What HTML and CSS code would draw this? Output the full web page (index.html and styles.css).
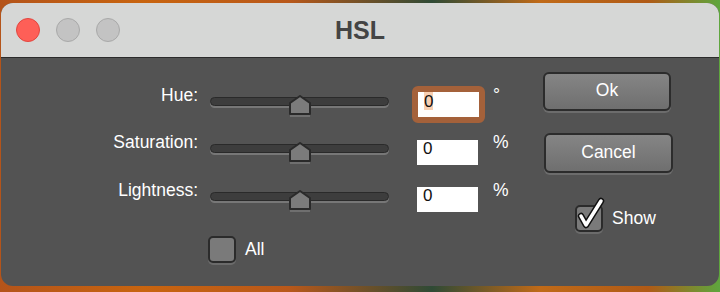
FILE: index.html
```html
<!DOCTYPE html>
<html lang="en">
<head>
  <meta charset="UTF-8">
  <title>HSL</title>
  <link rel="stylesheet" href="styles.css">
</head>
<body>

  <div class="window">
    <div class="titlebar">
      <div class="lights">
        <span class="light close"></span>
        <span class="light"></span>
        <span class="light"></span>
      </div>
      <h1 class="title">HSL</h1>
      <div></div>
    </div>

    <div class="content">
      <!-- sliders -->
      <div class="sliders">
        <label class="label">Hue:</label>
        <div class="slider">
          <div class="track"></div>
          <svg class="thumb" width="22" height="22" viewBox="0 0 22 22">
            <polygon points="1,8 11,1 21,8 21,19 1,19" fill="#7b7b7b" stroke="#2a2a2a" stroke-width="2" stroke-linejoin="round"/>
            <line x1="1" y1="21" x2="21" y2="21" stroke="#6f6f6f" stroke-width="2"/>
          </svg>
        </div>
        <div class="field focused"><span class="selected">0</span></div>
        <span class="unit">°</span>

        <label class="label">Saturation:</label>
        <div class="slider">
          <div class="track"></div>
          <svg class="thumb" width="22" height="22" viewBox="0 0 22 22">
            <polygon points="1,8 11,1 21,8 21,19 1,19" fill="#7b7b7b" stroke="#2a2a2a" stroke-width="2" stroke-linejoin="round"/>
            <line x1="1" y1="21" x2="21" y2="21" stroke="#6f6f6f" stroke-width="2"/>
          </svg>
        </div>
        <div class="field">0</div>
        <span class="unit">%</span>

        <label class="label">Lightness:</label>
        <div class="slider">
          <div class="track"></div>
          <svg class="thumb" width="22" height="22" viewBox="0 0 22 22">
            <polygon points="1,8 11,1 21,8 21,19 1,19" fill="#7b7b7b" stroke="#2a2a2a" stroke-width="2" stroke-linejoin="round"/>
            <line x1="1" y1="21" x2="21" y2="21" stroke="#6f6f6f" stroke-width="2"/>
          </svg>
        </div>
        <div class="field">0</div>
        <span class="unit">%</span>

        <div class="check-row all-row">
          <span class="checkbox"></span>
          <span class="check-label">All</span>
        </div>
      </div>

      <!-- buttons -->
      <div class="actions">
        <button class="button">Ok</button>
        <button class="button cancel">Cancel</button>
        <div class="check-row show-row">
          <span class="checkbox">
            <svg class="tick" width="32" height="34" viewBox="0 0 32 34">
              <polyline points="6,19 11,28 26,4" fill="none" stroke="#111" stroke-width="6.5" stroke-linecap="round" stroke-linejoin="round"/>
              <polyline points="6,19 11,28 26,4" fill="none" stroke="#fff" stroke-width="3.5" stroke-linecap="round" stroke-linejoin="round"/>
            </svg>
          </span>
          <span class="check-label">Show</span>
        </div>
      </div>
    </div>
  </div>

</body>
</html>
```

FILE: styles.css
```css
body {
  margin: 0;
  width: 720px;
  height: 292px;
  overflow: hidden;
  font-family: "Liberation Sans", Helvetica, Arial, sans-serif;
  background: linear-gradient(90deg, #b4541a 0%, #c8640f 20%, #b9581a 40%, #2f4a35 60%, #c06a18 75%, #b05a16 90%, #5ea63e 100%);
}

/* 창 */
.window {
  margin: 3px 1px 0 1px;
  height: 283px;
  border-radius: 12px;
  overflow: hidden;
  background: #535353;
  display: flex;
  flex-direction: column;
}

.titlebar {
  flex-shrink: 0;
  height: 54px;
  background: #d6d7d6;
  border-bottom: 1px solid #2b2b2b;
  display: grid;
  grid-template-columns: 1fr auto 1fr;
  align-items: center;
}

.lights {
  display: flex;
  gap: 16px;
  padding-left: 15px;
}

.light {
  width: 22px;
  height: 22px;
  border-radius: 50%;
  background: #c3c3c3;
  border: 1px solid #a9a9a9;
}

.light.close {
  background: #fe5f57;
  border-color: #e2463f;
}

.title {
  margin: 0;
  font-size: 25px;
  font-weight: bold;
  color: #444;
}

.content {
  flex: 1;
  min-height: 0;
  display: flex;
  padding-top: 14px;
}

/* 슬라이더 영역 */
.sliders {
  margin-top: 8px;
  display: grid;
  grid-template-columns: 209px 207px 75px 30px;
  grid-auto-rows: 47.5px;
  align-items: start;
}

.label {
  padding-right: 12px;
  margin-top: 4.5px;
  text-align: right;
  font-size: 17.5px;
  line-height: 20px;
  color: #fff;
}

.slider {
  position: relative;
  width: 179px;
  height: 22px;
  margin-top: 14.5px;
}

.track {
  margin-top: 2px;
  height: 7px;
  border: 1.5px solid #2a2a2a;
  border-radius: 6px;
  background: #3d3d3d;
  box-shadow: 0 2px 0 #777;
}

.thumb {
  position: absolute;
  left: 79px;
  top: 0;
}

.field {
  width: 55px;
  height: 25px;
  margin-top: 12px;
  padding-left: 6px;
  background: #fff;
  color: #111;
  font-size: 17px;
  line-height: 17px;
}

.field.focused {
  margin-top: 6px;
  margin-left: -5px;
  border: 6px solid #a4613a;
  border-radius: 6px;
  background-clip: padding-box;
}

.selected {
  display: inline-block;
  padding-top: 1px;
  background: #f8cfb1;
}

.unit {
  margin-top: 4.5px;
  padding-left: 1px;
  font-size: 17.5px;
  line-height: 20px;
  color: #fff;
}

/* 체크박스 */
.check-row {
  display: flex;
  align-items: center;
  gap: 9px;
}

.all-row {
  grid-column: 2;
  margin-top: 13.5px;
  margin-left: -2px;
}

.checkbox {
  position: relative;
  width: 24px;
  height: 23px;
  border: 2px solid #2b2b2b;
  border-radius: 5px;
  background: #7a7a7a;
  box-shadow: 0 2px 0 #6b6b6b;
}

.tick {
  position: absolute;
  left: -2px;
  top: -10px;
}

.check-label {
  font-size: 17.5px;
  color: #fff;
}

/* 버튼 */
.actions {
  margin-left: 21px;
  display: flex;
  flex-direction: column;
  align-items: flex-start;
}

.button {
  width: 128px;
  height: 39px;
  padding: 0 0 2px;
  border: 2px solid #2c2c2c;
  border-radius: 6px;
  background: linear-gradient(#858585, #6f6f6f);
  box-shadow: 0 2px 0 #6c6c6c;
  color: #fff;
  font-family: inherit;
  font-size: 17.5px;
}

.button.cancel {
  margin-top: 22px;
  margin-left: 1px;
  width: 129px;
  height: 40px;
}

.show-row {
  margin-top: 32px;
  margin-left: 32px;
}
```
